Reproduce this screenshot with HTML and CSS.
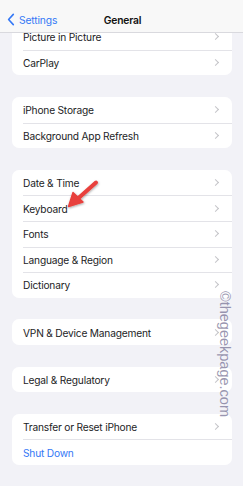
FILE: index.html
```html
<!DOCTYPE html>
<html>
<head>
<meta charset="utf-8">
<link rel="stylesheet" href="styles.css">
</head>
<body>
<div class="screen">
  <header class="navbar">
    <div class="back">
      <svg class="back-icon" width="8" height="13" viewBox="0 0 8 13"><path d="M6.3 1.4 L1.6 6.5 L6.3 11.6" fill="none" stroke="#3478f6" stroke-width="1.6" stroke-linecap="round" stroke-linejoin="round"/></svg>
      <span>Settings</span>
    </div>
    <div class="title">General</div>
  </header>

  <main class="content">
    <section class="group">
      <div class="row"><span class="label">Picture in Picture</span><span class="chev"></span></div>
      <div class="row"><span class="label">CarPlay</span><span class="chev"></span></div>
    </section>
    <section class="group">
      <div class="row"><span class="label">iPhone Storage</span><span class="chev"></span></div>
      <div class="row"><span class="label">Background App Refresh</span><span class="chev"></span></div>
    </section>
    <section class="group">
      <div class="row"><span class="label">Date &amp; Time</span><span class="chev"></span></div>
      <div class="row"><span class="label">Keyboard</span><span class="chev"></span></div>
      <div class="row"><span class="label">Fonts</span><span class="chev"></span></div>
      <div class="row"><span class="label">Language &amp; Region</span><span class="chev"></span></div>
      <div class="row"><span class="label">Dictionary</span><span class="chev"></span></div>
    </section>
    <section class="group">
      <div class="row"><span class="label">VPN &amp; Device Management</span><span class="chev"></span></div>
    </section>
    <section class="group">
      <div class="row"><span class="label">Legal &amp; Regulatory</span><span class="chev"></span></div>
    </section>
    <section class="group">
      <div class="row"><span class="label">Transfer or Reset iPhone</span><span class="chev"></span></div>
      <div class="row"><span class="label link">Shut Down</span></div>
    </section>
  </main>

  <svg class="arrow" width="44" height="34" viewBox="0 0 44 34">
    <defs>
      <filter id="sh" x="-30%" y="-30%" width="160%" height="160%">
        <feDropShadow dx="0.5" dy="1" stdDeviation="0.8" flood-color="#000" flood-opacity="0.35"/>
      </filter>
    </defs>
    <g filter="url(#sh)">
      <line x1="34" y1="3.5" x2="16" y2="19.5" stroke="#e8403c" stroke-width="4" stroke-linecap="round"/>
      <polygon points="6.5,27.5 11,13.5 21,23" fill="#e8403c" stroke="#e8403c" stroke-width="1.4" stroke-linejoin="round"/>
    </g>
  </svg>

  <div class="watermark">©thegeekpage.com</div>
</div>
</body>
</html>
```
FILE: styles.css
```css
* { box-sizing: border-box; }
html, body { margin: 0; padding: 0; }
body {
  background: #f2f2f7;
  font-family: "Inter", "Liberation Sans", sans-serif;
  color: #1c1c1e;
  -webkit-font-smoothing: antialiased;
}
.screen {
  position: relative;
  width: 243px;
  height: 486px;
  overflow: hidden;
  background: #f2f2f7;
}
.navbar {
  position: absolute;
  top: 0; left: 0; right: 0;
  height: 33px;
  background: rgba(248, 248, 248, 0.97);
  border-bottom: 1px solid #d9d9de;
  z-index: 2;
}
.back {
  position: absolute;
  left: 7px;
  top: 13px;
  display: flex;
  align-items: center;
  gap: 4px;
  color: #3478f6;
  font-size: 10.3px;
  letter-spacing: -0.15px;
}
.back-icon { display: block; }
.title {
  position: absolute;
  left: 0; right: 0;
  top: 14px;
  text-align: center;
  font-size: 10.3px;
  font-weight: 600;
  letter-spacing: -0.15px;
  color: #111;
  padding-left: 2px;
}
.content {
  padding: 24.2px 11px 0 12px;
  display: flex;
  flex-direction: column;
  gap: 21.6px;
}
.group {
  background: #fff;
  border-radius: 7px;
  overflow: hidden;
}
.row {
  position: relative;
  height: 25.6px;
  display: flex;
  align-items: center;
  padding: 0 12px 0 11px;
}
.row + .row::before {
  content: "";
  position: absolute;
  top: 0; left: 11px; right: 0;
  height: 1px;
  background: #e3e3e8;
}
.label {
  flex: 1;
  font-size: 10.2px;
  letter-spacing: -0.2px;
  padding-top: 1px;
}
.link { color: #3478f6; }
.chev {
  width: 5px;
  height: 5px;
  border-top: 1.1px solid #c4c4c8;
  border-right: 1.1px solid #c4c4c8;
  transform: rotate(45deg);
  margin-right: 2px;
}
.arrow {
  position: absolute;
  left: 62px;
  top: 179px;
}
.watermark {
  position: absolute;
  left: 216px;
  top: 291px;
  transform-origin: 0 0;
  transform: translate(17px, 0) rotate(90deg);
  font-family: "Liberation Sans", sans-serif;
  font-size: 14.5px;
  color: rgba(120, 116, 150, 0.75);
  white-space: nowrap;
  z-index: 3;
}
```
